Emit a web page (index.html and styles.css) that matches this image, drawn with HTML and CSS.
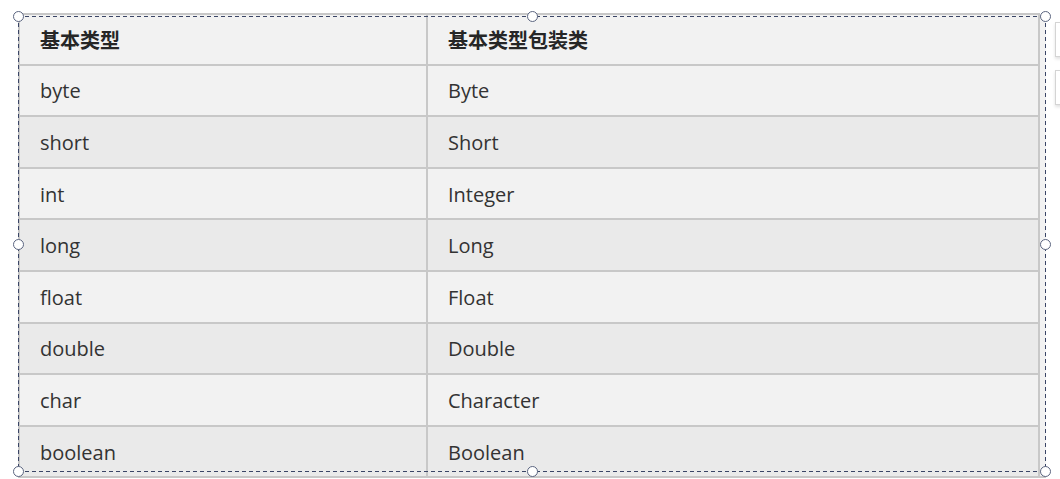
FILE: index.html
```html
<!DOCTYPE html>
<html lang="zh">
<head>
<meta charset="utf-8">
<link rel="stylesheet" href="styles.css">
</head>
<body>
<div class="stage">
  <div class="frame">
    <table class="types">
      <thead>
        <tr><th>基本类型</th><th>基本类型包装类</th></tr>
      </thead>
      <tbody>
        <tr><td>byte</td><td>Byte</td></tr>
        <tr><td>short</td><td>Short</td></tr>
        <tr><td>int</td><td>Integer</td></tr>
        <tr><td>long</td><td>Long</td></tr>
        <tr><td>float</td><td>Float</td></tr>
        <tr><td>double</td><td>Double</td></tr>
        <tr><td>char</td><td>Character</td></tr>
        <tr><td>boolean</td><td>Boolean</td></tr>
      </tbody>
    </table>
    <div class="strip"></div>
  </div>
  <div class="selection">
    <span class="handle h-tl"></span>
    <span class="handle h-tm"></span>
    <span class="handle h-tr"></span>
    <span class="handle h-ml"></span>
    <span class="handle h-mr"></span>
    <span class="handle h-bl"></span>
    <span class="handle h-bm"></span>
    <span class="handle h-br"></span>
  </div>
  <div class="side-btn b1"></div>
  <div class="side-btn b2"></div>
</div>
</body>
</html>
```
FILE: styles.css
```css
html, body {
  margin: 0;
  padding: 0;
  background: #ffffff;
  width: 1060px;
  height: 479px;
  overflow: hidden;
}
.stage {
  position: relative;
  width: 1060px;
  height: 479px;
  padding: 13px 0 0 18px;
  box-sizing: border-box;
}
.frame {
  display: flex;
  align-items: stretch;
}
.types {
  border-collapse: collapse;
  width: 1022px;
  table-layout: fixed;
  font-family: "Open Sans", "Noto Sans", "Noto Sans CJK SC", sans-serif;
  font-size: 20px;
  color: #333333;
}
.types th, .types td {
  border: 2px solid #c8c8c8;
  padding: 2px 0 0 20px;
  text-align: left;
  vertical-align: middle;
  line-height: 24px;
}
.types td {
  height: 47.6px;
}
.types th {
  height: 46.6px;
  font-family: "Noto Sans CJK SC", sans-serif;
  font-weight: 700;
  color: #262626;
  background: #f2f2f2;
}
.types th:first-child, .types td:first-child {
  width: 386px;
}
.types tbody tr:nth-child(odd) td { background: #f2f2f2; }
.types tbody tr:nth-child(even) td { background: #eaeaea; }
.strip {
  width: 6px;
  background: #f2f2f2;
  border-bottom: 2px solid #c8c8c8;
  margin-top: 2px;
}
.selection {
  position: absolute;
  left: 18px;
  top: 16px;
  width: 1028px;
  height: 456px;
  background:
    repeating-linear-gradient(90deg, #3a4566 0 4px, transparent 4px 7px) top left / 100% 1px no-repeat,
    repeating-linear-gradient(90deg, #3a4566 0 4px, transparent 4px 7px) bottom left / 100% 1px no-repeat,
    repeating-linear-gradient(180deg, #3a4566 0 4px, transparent 4px 7px) top left / 1px 100% no-repeat,
    repeating-linear-gradient(180deg, #3a4566 0 4px, transparent 4px 7px) top right / 1px 100% no-repeat;
}
.handle {
  position: absolute;
  width: 9px;
  height: 9px;
  border: 1px solid #5b6580;
  border-radius: 50%;
  background: #ffffff;
  margin: -5px 0 0 -5px;
}
.h-tl { left: 0; top: 0; }
.h-tm { left: 50%; top: 0; }
.h-tr { left: calc(100% - 1px); top: 0; }
.h-ml { left: 0; top: 50%; }
.h-mr { left: calc(100% - 1px); top: 50%; }
.h-bl { left: 0; top: calc(100% - 1px); }
.h-bm { left: 50%; top: calc(100% - 1px); }
.h-br { left: calc(100% - 1px); top: calc(100% - 1px); }
.side-btn {
  position: absolute;
  left: 1055px;
  width: 34px;
  height: 33px;
  background: #ffffff;
  border: 1px solid #d4d4d4;
  box-shadow: 0 2px 3px rgba(0,0,0,0.12);
}
.b1 { top: 22px; }
.b2 { top: 70px; }
```
